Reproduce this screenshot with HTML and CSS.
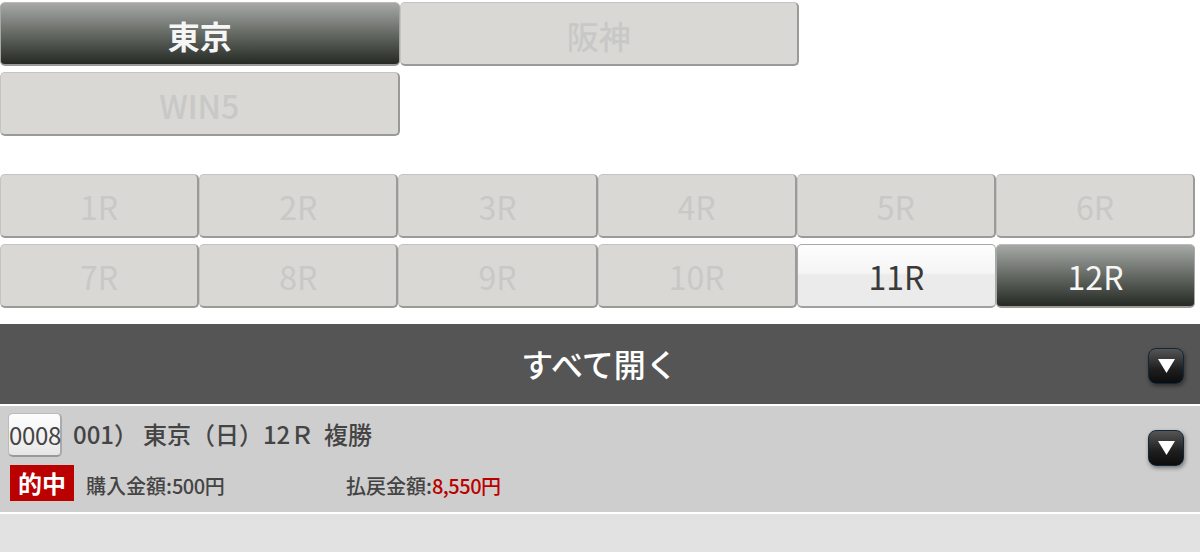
FILE: index.html
```html
<!DOCTYPE html>
<html lang="ja">
<head>
    <meta charset="UTF-8">
    <meta name="viewport" content="width=device-width, initial-scale=1.0">
    <title>投票履歴</title>
    <link rel="stylesheet" href="styles.css">
</head>
<body>
    <div class="venues">
        <a class="tab venue selected">東京</a>
        <a class="tab venue">阪神</a>
        <a class="tab venue">WIN5</a>
    </div>

    <div class="races">
        <a class="tab race">1R</a>
        <a class="tab race">2R</a>
        <a class="tab race">3R</a>
        <a class="tab race">4R</a>
        <a class="tab race">5R</a>
        <a class="tab race">6R</a>
        <a class="tab race">7R</a>
        <a class="tab race">8R</a>
        <a class="tab race">9R</a>
        <a class="tab race">10R</a>
        <a class="tab race active">11R</a>
        <a class="tab race selected">12R</a>
    </div>

    <div class="open-all">
        <span class="open-all-label">すべて開く</span>
        <span class="toggle">
            <svg width="17" height="14" viewBox="0 0 17 14"><polygon points="0,0 17,0 8.5,14" fill="#fff"/></svg>
        </span>
    </div>

    <div class="ticket">
        <div class="ticket-title">
            <span class="ticket-no">0008</span>
            <span class="ticket-name">001） 東京（日）12Ｒ  複勝</span>
        </div>
        <div class="ticket-info">
            <span class="hit">的中</span>
            <span class="bought">購入金額:<span class="num">500</span>円</span>
            <span class="payout">払戻金額:<span class="payout-value"><span class="num">8,550</span>円</span></span>
        </div>
        <span class="toggle">
            <svg width="17" height="14" viewBox="0 0 17 14"><polygon points="0,0 17,0 8.5,14" fill="#fff"/></svg>
        </span>
    </div>

    <div class="rest"></div>
</body>
</html>
```

FILE: styles.css
```css
html, body {
    height: 100%;
}

body {
    font-family: "Noto Sans CJK JP", "Noto Sans", sans-serif;
    background-color: #fff;
    color: #444;
    margin: 0;
    overflow: hidden;
    display: flex;
    flex-direction: column;
}

.venues {
    display: grid;
    grid-template-columns: repeat(2, 399.5px);
    grid-auto-rows: 64px;
    row-gap: 6px;
    padding-top: 2px;
}

.races {
    display: grid;
    grid-template-columns: repeat(6, 199.2px);
    grid-auto-rows: 64px;
    row-gap: 6px;
    padding-top: 38px;
}

.tab {
    display: flex;
    align-items: center;
    justify-content: center;
    box-sizing: border-box;
    background-color: #d9d8d5;
    color: #c8c8c6;
    border: 1px solid #c4c4c2;
    border-bottom: 2px solid #9a9a98;
    border-right: 2px solid #9a9a98;
    border-radius: 5px;
    font-weight: 500;
    padding-top: 1px;
}

.venue {
    font-size: 32px;
    padding-top: 3px;
}

.race {
    font-size: 32px;
    font-weight: 400;
}

.tab.selected {
    background: linear-gradient(#a6a9a6, #6c706b 45%, #262a25);
    color: #f6f6f6;
    border: 1px solid #a8a8a6;
    border-top-color: #bbb;
    border-bottom: 2px solid #9a9a98;
    font-weight: 700;
}

.race.selected {
    font-weight: 400;
}

.tab.active {
    background: linear-gradient(#fdfdfd, #f5f5f5 45%, #ebebeb 50%, #ebebeb);
    color: #3a3a3a;
    border: 1px solid #a8a8a6;
    border-bottom: 2px solid #a0a09e;
}

.open-all {
    position: relative;
    display: flex;
    align-items: center;
    justify-content: center;
    height: 80px;
    margin-top: 16px;
    background-color: #555;
    color: #fff;
    font-size: 32px;
    font-weight: 500;
}

.open-all-label {
    padding-right: 1px;
    padding-bottom: 2px;
}

.toggle {
    position: absolute;
    right: 16px;
    top: 24px;
    width: 34px;
    height: 34px;
    display: flex;
    align-items: center;
    justify-content: center;
    background: linear-gradient(#555, #1e1e1e 60%, #0c0c0c);
    border: 1px solid #10283c;
    border-radius: 8px;
    box-shadow: 1px 2px 4px rgba(0, 0, 0, 0.45);
}

.ticket {
    position: relative;
    box-sizing: border-box;
    height: 106px;
    margin-top: 2px;
    padding: 7px 0 0 8px;
    background-color: #cecece;
}

.ticket-title {
    display: flex;
    align-items: center;
    gap: 11px;
    height: 44px;
    font-size: 24px;
    font-weight: 500;
}

.ticket-name {
    white-space: pre;
    line-height: 42px;
    padding-bottom: 2px;
    word-spacing: -0.5px;
}

.ticket-no {
    box-sizing: border-box;
    width: 54px;
    height: 44px;
    line-height: 42px;
    text-align: center;
    background: linear-gradient(#fdfdfd, #f2f2f2 60%, #e6e6e6);
    border: 1px solid #bbb;
    border-bottom: 2px solid #999;
    border-right: 2px solid #aaa;
    border-radius: 5px;
    font-size: 24px;
    font-weight: 400;
    letter-spacing: -0.3px;
    white-space: nowrap;
}

.ticket-info {
    display: flex;
    align-items: center;
    margin-top: 8px;
    margin-left: 2px;
    height: 36px;
    font-size: 20px;
    font-weight: 500;
}

.bought, .payout {
    padding-top: 4px;
}

.num {
    letter-spacing: -0.5px;
}

.hit {
    width: 64px;
    height: 36px;
    line-height: 36px;
    text-align: center;
    background-color: #bb0000;
    color: #fff;
    font-size: 24px;
    font-weight: 700;
}

.bought {
    width: 260px;
    margin-left: 12px;
}

.payout-value {
    color: #bb0000;
}

.rest {
    flex: 1;
    margin-top: 2px;
    background-color: #e2e2e2;
}
```
